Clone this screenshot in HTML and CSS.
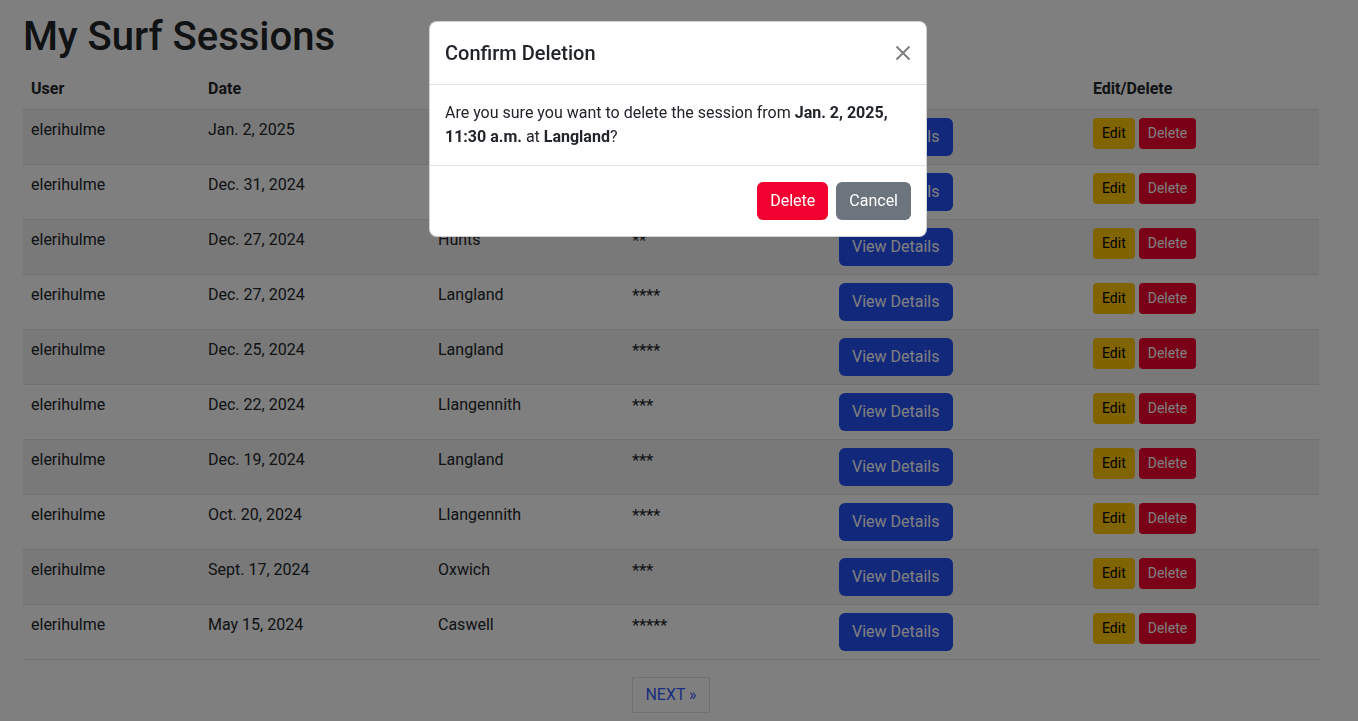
FILE: index.html
```html
<!DOCTYPE html>
<html lang="en">
<head>
<meta charset="utf-8">
<title>My Surf Sessions</title>
<link rel="stylesheet" href="styles.css">
</head>
<body>
<main class="container">
  <h1 class="page-title">My Surf Sessions</h1>
  <table class="sessions">
    <colgroup>
      <col class="c-user"><col class="c-date"><col class="c-loc"><col class="c-rating"><col class="c-details"><col class="c-actions">
    </colgroup>
    <thead>
      <tr><th>User</th><th>Date</th><th>Location</th><th>Rating</th><th>Details</th><th>Edit/Delete</th></tr>
    </thead>
    <tbody>
      <tr><td>elerihulme</td><td>Jan. 2, 2025</td><td>Langland</td><td class="stars">****</td><td><a class="btn btn-primary">View Details</a></td><td><a class="btn btn-sm btn-warning">Edit</a> <a class="btn btn-sm btn-danger">Delete</a></td></tr>
      <tr><td>elerihulme</td><td>Dec. 31, 2024</td><td>Langland</td><td class="stars">***</td><td><a class="btn btn-primary">View Details</a></td><td><a class="btn btn-sm btn-warning">Edit</a> <a class="btn btn-sm btn-danger">Delete</a></td></tr>
      <tr><td>elerihulme</td><td>Dec. 27, 2024</td><td>Hunts</td><td class="stars">**</td><td><a class="btn btn-primary">View Details</a></td><td><a class="btn btn-sm btn-warning">Edit</a> <a class="btn btn-sm btn-danger">Delete</a></td></tr>
      <tr><td>elerihulme</td><td>Dec. 27, 2024</td><td>Langland</td><td class="stars">****</td><td><a class="btn btn-primary">View Details</a></td><td><a class="btn btn-sm btn-warning">Edit</a> <a class="btn btn-sm btn-danger">Delete</a></td></tr>
      <tr><td>elerihulme</td><td>Dec. 25, 2024</td><td>Langland</td><td class="stars">****</td><td><a class="btn btn-primary">View Details</a></td><td><a class="btn btn-sm btn-warning">Edit</a> <a class="btn btn-sm btn-danger">Delete</a></td></tr>
      <tr><td>elerihulme</td><td>Dec. 22, 2024</td><td>Llangennith</td><td class="stars">***</td><td><a class="btn btn-primary">View Details</a></td><td><a class="btn btn-sm btn-warning">Edit</a> <a class="btn btn-sm btn-danger">Delete</a></td></tr>
      <tr><td>elerihulme</td><td>Dec. 19, 2024</td><td>Langland</td><td class="stars">***</td><td><a class="btn btn-primary">View Details</a></td><td><a class="btn btn-sm btn-warning">Edit</a> <a class="btn btn-sm btn-danger">Delete</a></td></tr>
      <tr><td>elerihulme</td><td>Oct. 20, 2024</td><td>Llangennith</td><td class="stars">****</td><td><a class="btn btn-primary">View Details</a></td><td><a class="btn btn-sm btn-warning">Edit</a> <a class="btn btn-sm btn-danger">Delete</a></td></tr>
      <tr><td>elerihulme</td><td>Sept. 17, 2024</td><td>Oxwich</td><td class="stars">***</td><td><a class="btn btn-primary">View Details</a></td><td><a class="btn btn-sm btn-warning">Edit</a> <a class="btn btn-sm btn-danger">Delete</a></td></tr>
      <tr><td>elerihulme</td><td>May 15, 2024</td><td>Caswell</td><td class="stars">*****</td><td><a class="btn btn-primary">View Details</a></td><td><a class="btn btn-sm btn-warning">Edit</a> <a class="btn btn-sm btn-danger">Delete</a></td></tr>
    </tbody>
  </table>
  <nav class="pager">
    <a class="page-link">NEXT »</a>
  </nav>
</main>

<div class="backdrop"></div>
<div class="modal">
  <div class="modal-dialog">
    <div class="modal-header">
      <h5 class="modal-title">Confirm Deletion</h5>
      <button class="btn-close" aria-label="Close">
        <svg width="16" height="16" viewBox="0 0 16 16"><path d="M1.5 1.5 L14.5 14.5 M14.5 1.5 L1.5 14.5" stroke="#000" stroke-width="2" fill="none"/></svg>
      </button>
    </div>
    <div class="modal-body">
      Are you sure you want to delete the session from <strong>Jan. 2, 2025, 11:30 a.m.</strong> at <strong>Langland</strong>?
    </div>
    <div class="modal-footer">
      <button class="btn btn-danger-solid">Delete</button>
      <button class="btn btn-secondary">Cancel</button>
    </div>
  </div>
</div>
</body>
</html>
```

FILE: styles.css
```css
* { box-sizing: border-box; }

html, body {
  margin: 0;
  padding: 0;
}

body {
  font-family: Roboto, "Liberation Sans", sans-serif;
  font-size: 16px;
  line-height: 1.5;
  color: #212529;
  background: #fff;
  overflow: hidden;
}

.container {
  width: 1296px;
  margin-left: 23px;
  padding-top: 13px;
}

.page-title {
  margin: 0 0 8px;
  font-size: 40px;
  font-weight: 500;
  line-height: 1.2;
}

.sessions {
  width: 100%;
  border-collapse: collapse;
  table-layout: fixed;
}

.c-user { width: 177px; }
.c-date { width: 230px; }
.c-loc { width: 194px; }
.c-rating { width: 207px; }
.c-details { width: 254px; }
.c-actions { width: 234px; }

.sessions th,
.sessions td {
  padding: 8px;
  text-align: left;
  vertical-align: top;
  border-bottom: 1px solid #dee2e6;
}

.sessions th { font-weight: 700; }

.sessions tbody tr:nth-child(odd) td {
  background: rgba(0, 0, 0, 0.05);
}

.stars {
  font-size: 17px;
  letter-spacing: -0.3px;
}

.btn {
  display: inline-block;
  padding: 6px 12px;
  font-family: inherit;
  font-size: 16px;
  line-height: 24px;
  font-weight: 400;
  border: 1px solid transparent;
  border-radius: 6px;
  text-decoration: none;
  cursor: pointer;
  color: #fff;
}

.btn-sm {
  padding: 4px 8px;
  font-size: 14px;
  line-height: 21px;
  border-radius: 4px;
}

.btn-primary { background: #2350f7; color: #fff; }
.btn-warning { background: #ffc800; color: #000; }
.btn-danger { background: #f2002f; color: #fff; }
.btn-danger-solid { background: #f20030; color: #fff; }
.btn-secondary { background: #6c757d; color: #fff; }

.pager {
  display: flex;
  justify-content: center;
  margin-top: 17px;
}

.page-link {
  display: inline-block;
  padding: 5px 12px;
  line-height: 24px;
  border: 1px solid #dee2e6;
  color: #3358ff;
  text-decoration: none;
}

.backdrop {
  position: fixed;
  inset: 0;
  background: rgba(0, 0, 0, 0.5);
}

.modal {
  position: fixed;
  inset: 0;
}

.modal-dialog {
  width: 498px;
  margin: 21px 0 0 calc(50% - 250px);
  background: #fff;
  border: 1px solid rgba(0, 0, 0, 0.175);
  border-radius: 8px;
}

.modal-header {
  display: flex;
  align-items: center;
  justify-content: space-between;
  padding: 16px 15px;
  border-bottom: 1px solid #dee2e6;
}

.modal-title {
  margin: 0;
  font-size: 20px;
  font-weight: 500;
  line-height: 1.5;
}

.btn-close {
  width: 24px;
  height: 24px;
  padding: 4px;
  margin: -8px -4px -8px auto;
  border: 0;
  background: transparent;
  opacity: 0.5;
  display: flex;
  align-items: center;
  justify-content: center;
}

.modal-body {
  padding: 16px 15px;
}

.modal-footer {
  display: flex;
  justify-content: flex-end;
  gap: 8px;
  padding: 16px 15px;
  border-top: 1px solid #dee2e6;
}
```
